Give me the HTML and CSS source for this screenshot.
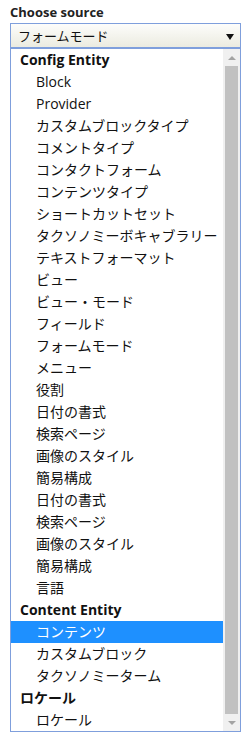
FILE: index.html
```html
<!DOCTYPE html>
<html lang="ja">
<head>
<meta charset="utf-8">
<link rel="stylesheet" href="styles.css">
</head>
<body>
<div class="field">
  <div class="label">Choose source</div>
  <div class="select">
    <span class="select-value">フォームモード</span>
    <span class="select-arrow"></span>
  </div>
  <div class="listbox">
    <div class="options">
      <div class="group">Config Entity</div>
      <div class="opt">Block</div>
      <div class="opt">Provider</div>
      <div class="opt">カスタムブロックタイプ</div>
      <div class="opt">コメントタイプ</div>
      <div class="opt">コンタクトフォーム</div>
      <div class="opt">コンテンツタイプ</div>
      <div class="opt">ショートカットセット</div>
      <div class="opt">タクソノミーボキャブラリー</div>
      <div class="opt">テキストフォーマット</div>
      <div class="opt">ビュー</div>
      <div class="opt">ビュー・モード</div>
      <div class="opt">フィールド</div>
      <div class="opt">フォームモード</div>
      <div class="opt">メニュー</div>
      <div class="opt">役割</div>
      <div class="opt">日付の書式</div>
      <div class="opt">検索ページ</div>
      <div class="opt">画像のスタイル</div>
      <div class="opt">簡易構成</div>
      <div class="opt">日付の書式</div>
      <div class="opt">検索ページ</div>
      <div class="opt">画像のスタイル</div>
      <div class="opt">簡易構成</div>
      <div class="opt">言語</div>
      <div class="group">Content Entity</div>
      <div class="opt selected">コンテンツ</div>
      <div class="opt">カスタムブロック</div>
      <div class="opt">タクソノミーターム</div>
      <div class="group">ロケール</div>
      <div class="opt">ロケール</div>
    </div>
    <div class="scrollbar">
      <div class="sb-btn"><span class="tri-up"></span></div>
      <div class="sb-track"><div class="sb-thumb"></div></div>
      <div class="sb-btn"><span class="tri-down"></span></div>
    </div>
  </div>
</div>
</body>
</html>
```
FILE: styles.css
```css
html, body {
  margin: 0;
  padding: 0;
  background: #ffffff;
}
body {
  font-family: "Open Sans", "Noto Sans CJK JP", sans-serif;
  color: #111;
}
.field {
  padding: 3px 0 0 10px;
  width: 231px;
}
.label {
  font-size: 13px;
  font-weight: bold;
  line-height: 18px;
  height: 20px;
  color: #222;
}
.select {
  box-sizing: border-box;
  height: 25px;
  border: 1px solid #7f9fdc;
  background: linear-gradient(#fdfdfb, #ebebe0);
  display: flex;
  align-items: center;
  justify-content: space-between;
  padding: 0 6px 0 7px;
}
.select-value {
  font-size: 13px;
  line-height: 22px;
  color: #111;
}
.select-arrow {
  width: 0;
  height: 0;
  border-left: 4.5px solid transparent;
  border-right: 4.5px solid transparent;
  border-top: 6px solid #111;
  margin-top: 2px;
}
.listbox {
  box-sizing: border-box;
  border: 1px solid #7f9fdc;
  border-top-width: 1px;
  display: flex;
  height: 684px;
}
.options {
  flex: 1;
  font-size: 14px;
}
.group {
  height: 22px;
  line-height: 22px;
  padding-left: 9px;
  font-weight: bold;
  color: #111;
}
.opt {
  height: 22px;
  line-height: 22px;
  padding-left: 25px;
  color: #111;
}
.opt.selected {
  background: #1e90ff;
  color: #ffffff;
}
.scrollbar {
  width: 17px;
  background: #f0f0f0;
  display: flex;
  flex-direction: column;
}
.sb-btn {
  height: 17px;
  display: flex;
  align-items: center;
  justify-content: center;
}
.tri-up {
  width: 0;
  height: 0;
  border-left: 4px solid transparent;
  border-right: 4px solid transparent;
  border-bottom: 4px solid #a3a3a3;
}
.tri-down {
  width: 0;
  height: 0;
  border-left: 4px solid transparent;
  border-right: 4px solid transparent;
  border-top: 4px solid #a3a3a3;
}
.sb-track {
  flex: 1;
  padding: 0 2px;
  display: flex;
}
.sb-thumb {
  flex: 1;
  background: #c1c1c1;
}
```
